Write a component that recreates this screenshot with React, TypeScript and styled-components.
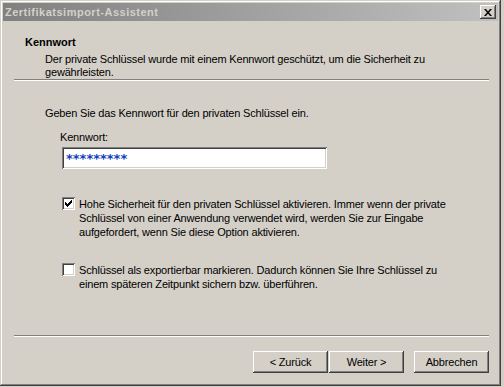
import React from 'react';
import styled, { createGlobalStyle } from 'styled-components';

const GlobalStyle = createGlobalStyle`
    html, body {
        margin: 0;
        padding: 0;
        background: #d4d0c8;
    }
    body {
        font-family: "Liberation Sans", Arial, sans-serif;
        font-size: 11px;
        letter-spacing: -0.17px;
        color: #000;
    }
`;

const FACE = '#d4d0c8';

const App: React.FC = () => {
    return (
        <>
            <GlobalStyle />
            <StyledDesktop>
                <StyledWindow>
                    <StyledTitleBar>
                        <StyledTitleText>Zertifikatsimport-Assistent</StyledTitleText>
                        <StyledCloseButton>
                            <svg width="8" height="7" viewBox="0 0 8 7">
                                <path d="M0 0h2l2 2.5L6 0h2L5 3.5 8 7H6L4 4.5 2 7H0l3-3.5z" fill="#000" />
                            </svg>
                        </StyledCloseButton>
                    </StyledTitleBar>

                    <StyledHeader>
                        <StyledHeaderTitle>Kennwort</StyledHeaderTitle>
                        <StyledHeaderText>
                            Der private Schlüssel wurde mit einem Kennwort geschützt, um die Sicherheit zu
                            <br />
                            gewährleisten.
                        </StyledHeaderText>
                    </StyledHeader>

                    <StyledSeparator />

                    <StyledBody>
                        <StyledIntro>Geben Sie das Kennwort für den privaten Schlüssel ein.</StyledIntro>
                        <StyledField>
                            <StyledLabel>Kennwort:</StyledLabel>
                            <StyledInput>*********</StyledInput>
                        </StyledField>

                        <StyledOption>
                            <StyledCheckBox>
                                <svg width="7" height="7" viewBox="0 0 7 7">
                                    <path d="M0 2h1v1h1v1h1V3h1V2h1V1h1V0h1v3H6v1H5v1H4v1H3v1H2V6H1V5H0z" fill="#000" />
                                </svg>
                            </StyledCheckBox>
                            <StyledOptionText>
                                Hohe Sicherheit für den privaten Schlüssel aktivieren. Immer wenn der private
                                <br />
                                Schlüssel von einer Anwendung verwendet wird, werden Sie zur Eingabe
                                <br />
                                aufgefordert, wenn Sie diese Option aktivieren.
                            </StyledOptionText>
                        </StyledOption>

                        <StyledOption>
                            <StyledCheckBox />
                            <StyledOptionText>
                                Schlüssel als exportierbar markieren. Dadurch können Sie Ihre Schlüssel zu
                                <br />
                                einem späteren Zeitpunkt sichern bzw. überführen.
                            </StyledOptionText>
                        </StyledOption>
                    </StyledBody>

                    <StyledSeparator />

                    <StyledFooter>
                        <StyledButtonPair>
                            <StyledButton>&lt; Zurück</StyledButton>
                            <StyledButton>Weiter &gt;</StyledButton>
                        </StyledButtonPair>
                        <StyledButton>Abbrechen</StyledButton>
                    </StyledFooter>
                </StyledWindow>
            </StyledDesktop>
        </>
    );
};

const StyledDesktop = styled.div`
    width: 504px;
    height: 387px;
    background: #d4d0c8;
    overflow: hidden;
`;

const StyledWindow = styled.div`
    width: 501px;
    height: 386px;
    box-sizing: border-box;
    padding: 3px;
    background: ${FACE};
    display: flex;
    flex-direction: column;
    box-shadow: inset -1px -1px #404040, inset 1px 1px ${FACE}, inset -2px -2px #808080, inset 2px 2px #ffffff;
`;

const StyledTitleBar = styled.div`
    height: 18px;
    flex-shrink: 0;
    display: flex;
    align-items: center;
    justify-content: space-between;
    padding: 0 2px 0 2px;
    background: linear-gradient(to right, #808080, #c0c0c0);
`;

const StyledTitleText = styled.div`
    color: ${FACE};
    font-weight: bold;
    font-size: 11px;
    letter-spacing: 0.5px;
`;

const StyledCloseButton = styled.div`
    width: 16px;
    height: 14px;
    box-sizing: border-box;
    display: flex;
    align-items: center;
    justify-content: center;
    background: ${FACE};
    box-shadow: inset -1px -1px #404040, inset 1px 1px #ffffff, inset -2px -2px #808080;
`;

const StyledHeader = styled.div`
    height: 58px;
    box-sizing: border-box;
    padding: 15px 0 0 22px;
`;

const StyledHeaderTitle = styled.div`
    font-weight: bold;
    line-height: 13px;
    letter-spacing: 0;
`;

const StyledHeaderText = styled.div`
    margin: 4px 0 0 20px;
    line-height: 13px;
`;

const StyledSeparator = styled.div`
    height: 1px;
    margin: 0 9px 0 11px;
    background: #808080;
    border-bottom: 1px solid #ffffff;
    flex-shrink: 0;
`;

const StyledBody = styled.div`
    flex: 1;
    padding: 26px 0 0 42px;
    display: flex;
    flex-direction: column;
`;

const StyledIntro = styled.div`
    line-height: 13px;
`;

const StyledField = styled.div`
    margin: 11px 0 0 15px;
    display: flex;
    flex-direction: column;
`;

const StyledLabel = styled.div`
    line-height: 13px;
    margin-bottom: 3px;
`;

const StyledInput = styled.div`
    width: 265px;
    height: 22px;
    box-sizing: border-box;
    margin-left: 2px;
    padding: 2px 3px 0 4px;
    background: #ffffff;
    color: #1040c0;
    font-family: "DejaVu Sans", sans-serif;
    font-weight: bold;
    font-size: 13px;
    line-height: 20px;
    letter-spacing: 0;
    box-shadow: inset 1px 1px #808080, inset -1px -1px #ffffff, inset 2px 2px #404040, inset -2px -2px ${FACE};
`;

const StyledOption = styled.div`
    display: flex;
    align-items: flex-start;
    margin: 28px 0 0 17px;
    & + & {
        margin-top: 24px;
    }
`;

const StyledCheckBox = styled.div`
    width: 13px;
    height: 13px;
    flex-shrink: 0;
    box-sizing: border-box;
    display: flex;
    align-items: center;
    justify-content: center;
    background: #ffffff;
    box-shadow: inset 1px 1px #808080, inset -1px -1px #ffffff, inset 2px 2px #404040, inset -2px -2px ${FACE};
`;

const StyledOptionText = styled.div`
    margin-left: 4px;
    line-height: 14px;
`;

const StyledFooter = styled.div`
    display: flex;
    justify-content: flex-end;
    gap: 10px;
    padding: 14px 9px 10px 0;
`;

const StyledButtonPair = styled.div`
    display: flex;
    gap: 1px;
`;

const StyledButton = styled.div`
    width: 75px;
    height: 22px;
    box-sizing: border-box;
    display: flex;
    align-items: center;
    justify-content: center;
    background: ${FACE};
    box-shadow: inset -1px -1px #404040, inset 1px 1px #ffffff, inset -2px -2px #808080;
`;

export default App;
